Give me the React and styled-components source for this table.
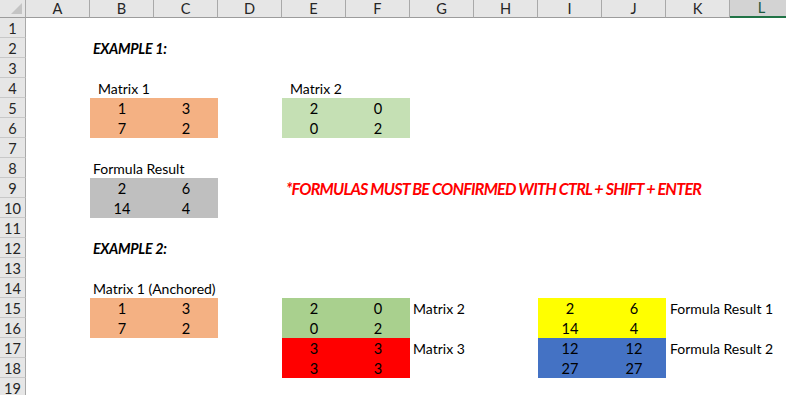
import React from "react";
import styled, { createGlobalStyle } from "styled-components";

const COLUMNS = ["A", "B", "C", "D", "E", "F", "G", "H", "I", "J", "K", "L"];
const ROW_COUNT = 19;
const SELECTED_COLUMN = "L";

const fills = {
  orange: "#F4B183",
  lightGreen: "#C5E0B4",
  green: "#A9D08E",
  grey: "#BFBFBF",
  red: "#FF0000",
  yellow: "#FFFF00",
  blue: "#4472C4"
};

// 2x2 matrices: col/row are 1-based sheet coordinates of the top-left cell
const matrices = [
  { col: 2, row: 5, fill: "orange", values: [[1, 3], [7, 2]] },
  { col: 5, row: 5, fill: "lightGreen", values: [[2, 0], [0, 2]] },
  { col: 2, row: 9, fill: "grey", values: [[2, 6], [14, 4]] },
  { col: 2, row: 15, fill: "orange", values: [[1, 3], [7, 2]] },
  { col: 5, row: 15, fill: "green", values: [[2, 0], [0, 2]] },
  { col: 5, row: 17, fill: "red", values: [[3, 3], [3, 3]] },
  { col: 9, row: 15, fill: "yellow", values: [[2, 6], [14, 4]] },
  { col: 9, row: 17, fill: "blue", values: [[12, 12], [27, 27]] }
];

const labels = [
  { col: 2, row: 2, text: "EXAMPLE 1:", indent: 3, variant: "heading" },
  { col: 2, row: 4, text: "Matrix 1", indent: 8 },
  { col: 5, row: 4, text: "Matrix 2", indent: 8 },
  { col: 2, row: 8, text: "Formula Result", indent: 3 },
  {
    col: 5,
    row: 9,
    text: "*FORMULAS MUST BE CONFIRMED WITH CTRL + SHIFT + ENTER",
    indent: 4,
    variant: "note"
  },
  { col: 2, row: 12, text: "EXAMPLE 2:", indent: 3, variant: "heading" },
  { col: 2, row: 14, text: "Matrix 1 (Anchored)", indent: 3 },
  { col: 7, row: 15, text: "Matrix 2", indent: 3 },
  { col: 7, row: 17, text: "Matrix 3", indent: 3 },
  { col: 11, row: 15, text: "Formula Result 1", indent: 4 },
  { col: 11, row: 17, text: "Formula Result 2", indent: 4 }
];

const labelFonts = {
  plain: { size: "14px", weight: 400, style: "normal", spacing: "0", color: "#000" },
  heading: { size: "14.3px", weight: 700, style: "italic", spacing: "-0.3px", color: "#000" },
  note: { size: "16.2px", weight: 700, style: "italic", spacing: "-0.8px", color: "#FF0000" }
};

const GlobalStyle = createGlobalStyle`
  html, body {
    margin: 0;
    padding: 0;
    background: #ffffff;
    overflow: hidden;
  }
  body {
    font-family: Lato, "Noto Sans", sans-serif;
  }
`;

const Sheet = styled.div`
  display: grid;
  grid-template-columns: 26px repeat(${COLUMNS.length}, 64px);
  grid-template-rows: 18px repeat(${ROW_COUNT}, 20px);
  width: max-content;
  font-size: 14.6px;
  color: #000;
`;

const Corner = styled.div`
  grid-column: 1;
  grid-row: 1;
  background: #e6e6e6;
  border-right: 1px solid #a9a9a9;
  border-bottom: 1px solid #9c9c9c;
  position: relative;

  &::after {
    content: "";
    position: absolute;
    right: 3px;
    bottom: 3px;
    width: 0;
    height: 0;
    border-left: 11px solid transparent;
    border-bottom: 11px solid #c4c4c4;
  }
`;

const ColHeader = styled.div`
  grid-row: 1;
  grid-column: ${p => p.$index + 2};
  display: flex;
  align-items: center;
  justify-content: center;
  background: ${p => (p.$selected ? "#d3d3d3" : "#e6e6e6")};
  border-right: 1px solid #a9a9a9;
  border-bottom: ${p => (p.$selected ? "2px solid #217346" : "1px solid #9c9c9c")};
  color: ${p => (p.$selected ? "#1d5a40" : "#262626")};
  font-size: 14.6px;
  line-height: 16px;
  box-sizing: border-box;
`;

const RowHeader = styled.div`
  grid-column: 1;
  grid-row: ${p => p.$row + 1};
  display: flex;
  align-items: center;
  justify-content: center;
  background: #e6e6e6;
  border-right: 1px solid #a9a9a9;
  border-bottom: 1px solid #c8c8c8;
  color: #262626;
  font-size: 14.6px;
  box-sizing: border-box;
  padding-top: 1px;
`;

const Fill = styled.div`
  grid-column: ${p => p.$col + 1} / span 2;
  grid-row: ${p => p.$row + 1} / span 2;
  background: ${p => fills[p.$fill]};
`;

const NumberCell = styled.div`
  grid-column: ${p => p.$col + 1};
  grid-row: ${p => p.$row + 1};
  display: flex;
  align-items: flex-end;
  justify-content: center;
  line-height: 18px;
  z-index: 1;
`;

const Label = styled.div`
  grid-column: ${p => p.$col + 1};
  grid-row: ${p => p.$row + 1};
  display: flex;
  align-items: flex-end;
  padding-left: ${p => p.$indent}px;
  white-space: nowrap;
  overflow: visible;
  line-height: 18px;
  font-size: ${p => labelFonts[p.$variant].size};
  font-weight: ${p => labelFonts[p.$variant].weight};
  font-style: ${p => labelFonts[p.$variant].style};
  letter-spacing: ${p => labelFonts[p.$variant].spacing};
  color: ${p => labelFonts[p.$variant].color};
  z-index: 1;
`;

const App = () => {
  const rows = Array.from({ length: ROW_COUNT }, (_, i) => i + 1);

  return (
    <>
      <GlobalStyle />
      <Sheet>
        <Corner />
        {COLUMNS.map((letter, i) => (
          <ColHeader key={letter} $index={i} $selected={letter === SELECTED_COLUMN}>
            {letter}
          </ColHeader>
        ))}
        {rows.map(r => (
          <RowHeader key={r} $row={r}>
            {r}
          </RowHeader>
        ))}

        {matrices.map(m => (
          <React.Fragment key={`${m.col}-${m.row}`}>
            <Fill $col={m.col} $row={m.row} $fill={m.fill} />
            {m.values.map((line, dy) =>
              line.map((value, dx) => (
                <NumberCell key={`${dx}-${dy}`} $col={m.col + dx} $row={m.row + dy}>
                  {value}
                </NumberCell>
              ))
            )}
          </React.Fragment>
        ))}

        {labels.map(l => (
          <Label
            key={`${l.col}-${l.row}`}
            $col={l.col}
            $row={l.row}
            $indent={l.indent}
            $variant={l.variant || "plain"}
          >
            {l.text}
          </Label>
        ))}
      </Sheet>
    </>
  );
};

export default App;
